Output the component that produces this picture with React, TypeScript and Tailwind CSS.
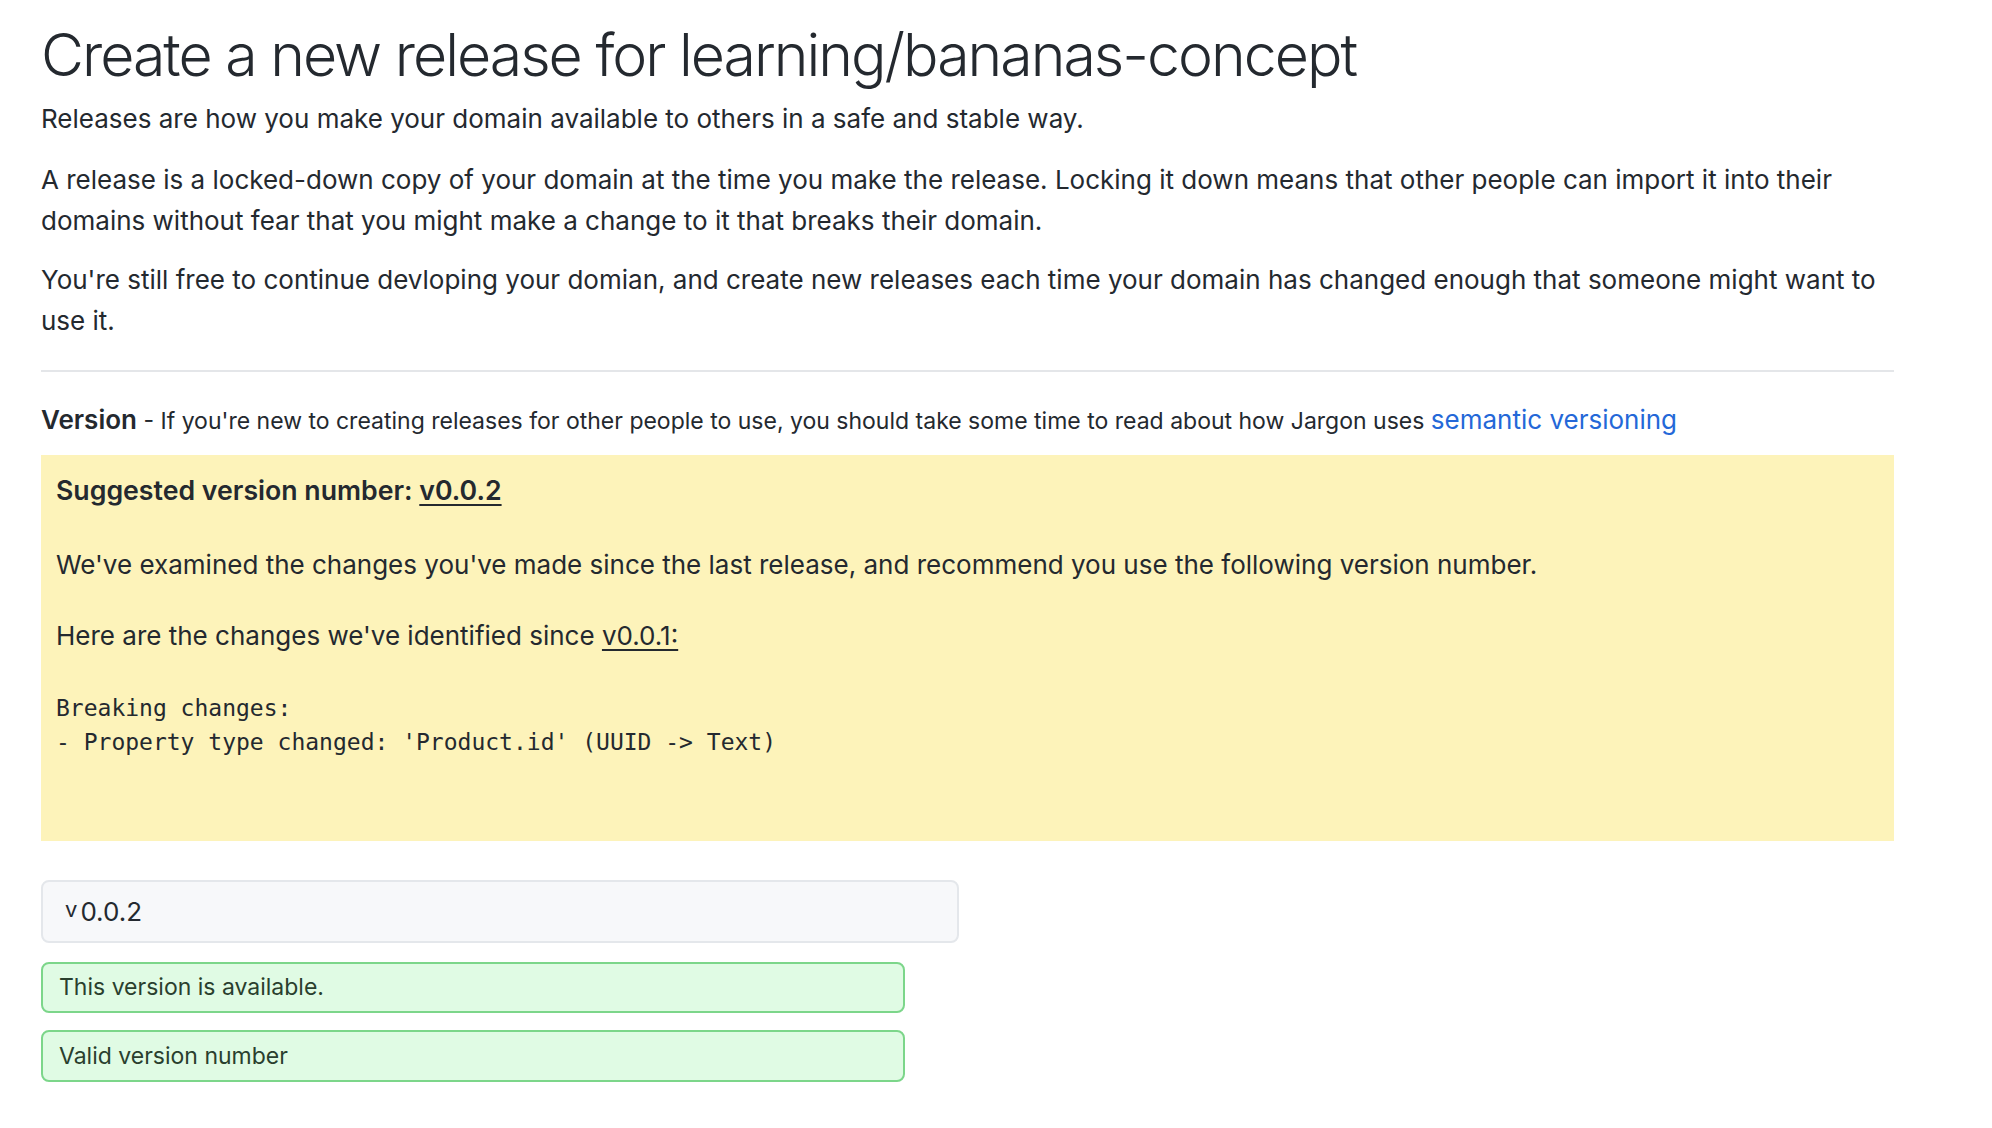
import React from "react";

const sans = { fontFamily: "Inter, 'Noto Sans', sans-serif" };

export default function App() {
  return (
    <div className="min-h-[1128px] w-[1992px] bg-white text-[#24292f]" style={sans}>
      <div className="w-[1853px] pl-[41px] box-content">
        <h1 className="mt-[17px] text-[59px] leading-[76px] font-light tracking-[-2px]">
          Create a new release for learning/bananas-concept
        </h1>
        <p className="mt-[8px] text-[26px] leading-[36px]">
          Releases are how you make your domain available to others in a safe and stable way.
        </p>
        <p className="mt-[22px] text-[26px] leading-[41px]">
          A release is a locked-down copy of your domain at the time you make the release. Locking it down means that other people can import it into their domains without fear that you might make a change to it that breaks their domain.
        </p>
        <p className="mt-[18px] text-[26px] leading-[41px]">
          You're still free to continue devloping your domian, and create new releases each time your domain has changed enough that someone might want to use it.
        </p>
        <hr className="mt-[29px] border-0 h-[2px] bg-[#e4e6e9]" />
        <div className="mt-[30px] leading-[36px]">
          <span className="text-[26px] font-semibold">Version</span>
          <span className="text-[23px]"> - If you're new to creating releases for other people to use, you should take some time to read about how Jargon uses </span>
          <a className="text-[26px] text-[#2468d8]">semantic versioning</a>
        </div>
        <div className="mt-[14px] h-[386px] bg-[#fdf3ba] px-[15px] pt-[17px]">
          <div className="text-[26.7px] leading-[36px] font-semibold">
            Suggested version number: <span className="underline underline-offset-4">v0.0.2</span>
          </div>
          <div className="mt-[39px] text-[26px] leading-[36px]">
            We've examined the changes you've made since the last release, and recommend you use the following version number.
          </div>
          <div className="mt-[35px] text-[26px] leading-[36px]">
            Here are the changes we've identified since <span className="underline underline-offset-4">v0.0.1:</span>
          </div>
          <pre
            className="mt-[37px] text-[23px] leading-[34px]"
            style={{ fontFamily: "'DejaVu Sans Mono', 'Liberation Mono', monospace" }}
          >
{`Breaking changes:
- Property type changed: 'Product.id' (UUID -> Text)`}
          </pre>
        </div>
        <div className="mt-[39px] w-[918px] h-[63px] rounded-[8px] border-2 border-[#e4e7eb] bg-[#f7f8fa] flex items-center pl-[22px]">
          <span className="text-[22px] leading-none -mt-[6px] mr-[3px]">v</span>
          <span className="text-[26px]">0.0.2</span>
        </div>
        <div className="mt-[19px] w-[864px] h-[51px] rounded-[8px] border-2 border-[#7cd68a] bg-[#e0fbe4] flex items-center pl-[16px] text-[23px] text-[#2a3f2e]">
          This version is available.
        </div>
        <div className="mt-[17px] w-[864px] h-[52px] rounded-[8px] border-2 border-[#7cd68a] bg-[#e0fbe4] flex items-center pl-[16px] text-[23px] text-[#2a3f2e]">
          Valid version number
        </div>
      </div>
    </div>
  );
}
